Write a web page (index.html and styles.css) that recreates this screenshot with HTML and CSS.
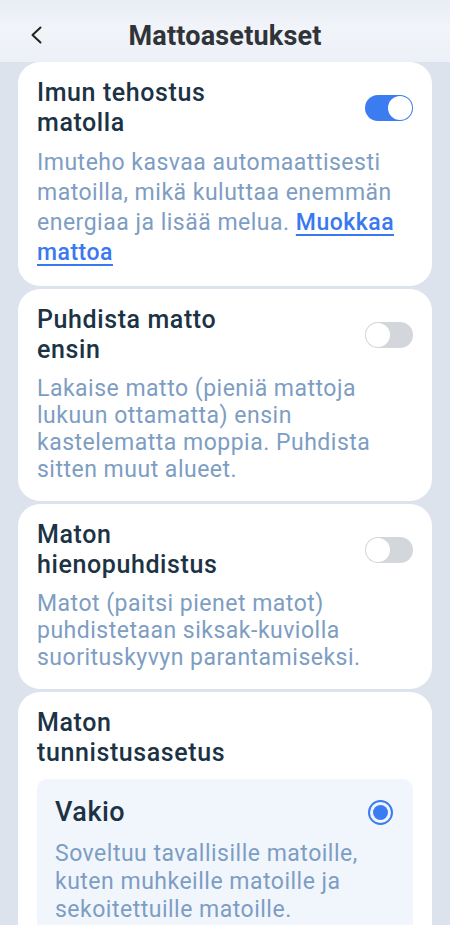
FILE: index.html
```html
<!DOCTYPE html>
<html lang="fi">
<head>
<meta charset="utf-8">
<link rel="stylesheet" href="styles.css">
</head>
<body>
<header class="topbar">
  <span class="back"><svg width="14" height="20" viewBox="0 0 14 20"><path d="M11.5 2.5 L3.5 10 L11.5 17.5" fill="none" stroke="#222" stroke-width="2" stroke-linecap="round" stroke-linejoin="round"/></svg></span>
  <h1 class="page-title">Mattoasetukset</h1>
</header>
<main class="list">
  <section class="card">
    <div class="row">
      <h2 class="title">Imun tehostus matolla</h2>
      <span class="toggle on"><span class="knob"></span></span>
    </div>
    <p class="desc loose">Imuteho kasvaa automaattisesti matoilla, mikä kuluttaa enemmän energiaa ja lisää melua. <a class="link">Muokkaa mattoa</a></p>
  </section>
  <section class="card">
    <div class="row">
      <h2 class="title">Puhdista matto ensin</h2>
      <span class="toggle"><span class="knob"></span></span>
    </div>
    <p class="desc">Lakaise matto (pieniä mattoja lukuun ottamatta) ensin kastelematta moppia. Puhdista sitten muut alueet.</p>
  </section>
  <section class="card">
    <div class="row">
      <h2 class="title">Maton hienopuhdistus</h2>
      <span class="toggle"><span class="knob"></span></span>
    </div>
    <p class="desc">Matot (paitsi pienet matot) puhdistetaan siksak-kuviolla suorituskyvyn parantamiseksi.</p>
  </section>
  <section class="card last">
    <h2 class="title">Maton tunnistusasetus</h2>
    <div class="option">
      <div class="option-row">
        <span class="option-title">Vakio</span>
        <span class="radio"><span class="dot"></span></span>
      </div>
      <p class="option-desc">Soveltuu tavallisille matoille, kuten muhkeille matoille ja sekoitettuille matoille.</p>
    </div>
  </section>
</main>
</body>
</html>
```
FILE: styles.css
```css
* { box-sizing: border-box; }
html, body { margin: 0; padding: 0; }
body {
  width: 450px;
  height: 925px;
  overflow: hidden;
  background: #dce3ec;
  font-family: Roboto, "Noto Sans", "Liberation Sans", sans-serif;
}
.topbar {
  height: 62px;
  display: flex;
  align-items: center;
  justify-content: center;
  position: relative;
  background: linear-gradient(180deg, #e8edf4 0%, #f1f4f9 45%, #edf1f7 100%);
}
.back {
  position: absolute;
  left: 29px;
  top: 25px;
  display: flex;
}
.page-title {
  margin: 9px 0 0;
  font-size: 27px;
  font-weight: 700;
  color: #303438;
  letter-spacing: 0.2px;
}
.list {
  display: flex;
  flex-direction: column;
  gap: 3px;
  padding: 0 18px;
}
.card {
  background: #fff;
  border-radius: 22px;
  padding: 16px 19px 18px;
}
.row {
  display: flex;
  align-items: center;
  justify-content: space-between;
}
.title {
  margin: 0;
  width: 220px;
  font-size: 25px;
  line-height: 30px;
  font-weight: 500;
  letter-spacing: 0.6px;
  color: #1c3345;
}
.toggle {
  width: 48px;
  height: 26px;
  border-radius: 13px;
  background: #d3d6da;
  position: relative;
  flex: none;
}
.toggle .knob {
  position: absolute;
  left: 1px;
  top: 1px;
  width: 24px;
  height: 24px;
  border-radius: 50%;
  background: #fff;
}
.toggle.on { background: #3b7cf1; }
.toggle.on .knob { left: 23px; }
.desc {
  margin: 10px 0 0;
  font-size: 23px;
  line-height: 27px;
  letter-spacing: 0.5px;
  color: #7d9dc3;
}
.desc.loose { line-height: 30px; }
.link {
  color: #3a78f0;
  font-weight: 500;
  text-decoration: underline;
  text-underline-offset: 4px;
  text-decoration-thickness: 2px;
}
.option {
  margin-top: 11px;
  background: #f1f6fd;
  border-radius: 10px;
  padding: 17px 20px 12px 18px;
}
.option-row {
  display: flex;
  align-items: center;
  justify-content: space-between;
}
.option-title {
  font-size: 27px;
  line-height: 32px;
  font-weight: 500;
  letter-spacing: 0.5px;
  color: #1c3345;
}
.radio {
  width: 25px;
  height: 25px;
  border-radius: 50%;
  border: 2px solid #3b7cf1;
  display: flex;
  align-items: center;
  justify-content: center;
}
.radio .dot {
  width: 15px;
  height: 15px;
  border-radius: 50%;
  background: #3b7cf1;
}
.option-desc {
  margin: 12px 0 0;
  font-size: 23px;
  line-height: 28px;
  letter-spacing: 0.5px;
  color: #7d9dc3;
}
```
